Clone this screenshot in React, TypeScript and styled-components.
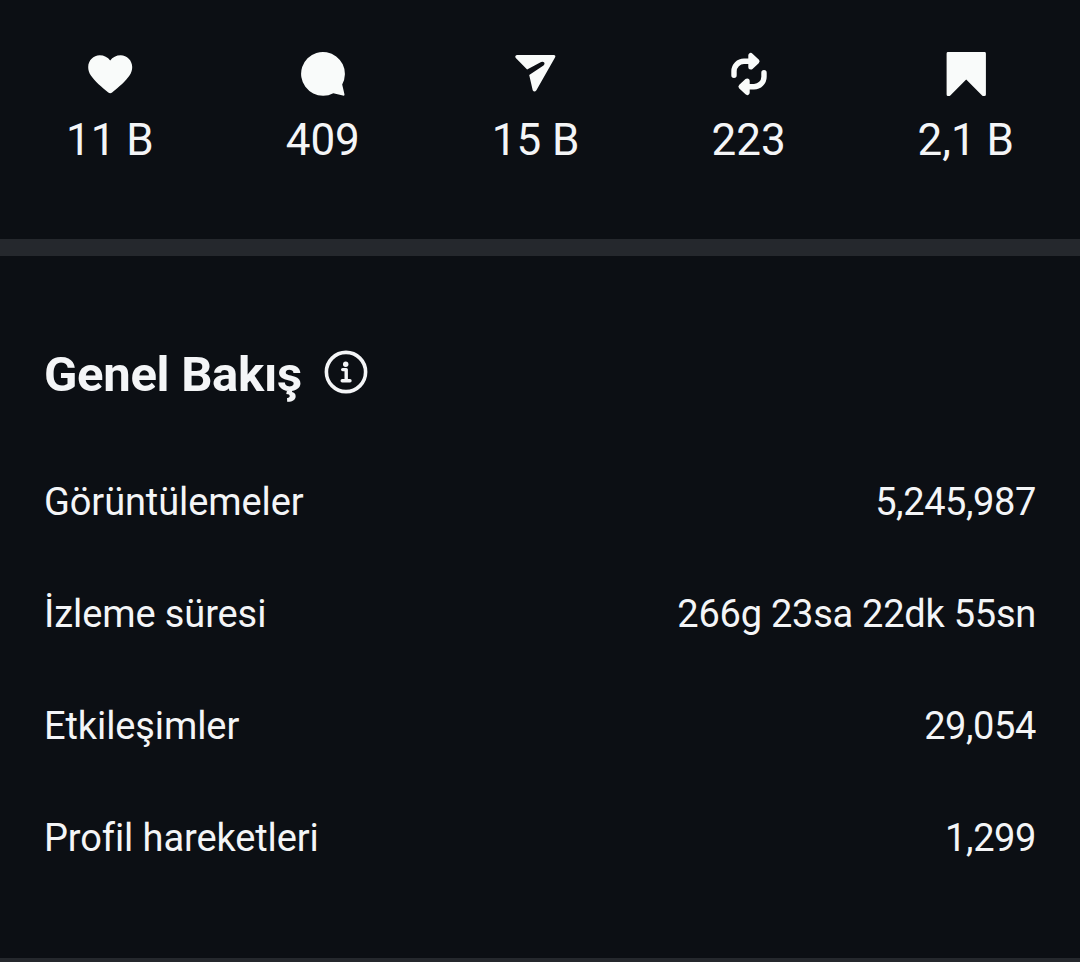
import React from 'react'
import styled, { createGlobalStyle } from 'styled-components'

const GlobalStyle = createGlobalStyle`
  * {
    box-sizing: border-box;
  }

  body {
    margin: 0;
    background: #0c0f14;
    color: #f4f5f7;
    font-family: Roboto, "Liberation Sans", sans-serif;
  }

  h2, ul, dl, dd {
    margin: 0;
    padding: 0;
  }
`;

const Screen = styled.main`
  display: flex;
  flex-direction: column;
  width: 1080px;
  height: 962px;
  overflow: hidden;
`;

const StatsBar = styled.ul`
  display: flex;
  justify-content: space-around;
  height: 239px;
  padding-top: 50px;
  list-style: none;
`;

const Stat = styled.li`
  display: flex;
  flex-direction: column;
  align-items: center;
  gap: 16px;
  font-size: 44px;
  line-height: 52px;
  white-space: nowrap;
`;

const StatIcon = styled.svg`
  width: 48px;
  height: 48px;
  fill: #f9fbfa;
`;

const Divider = styled.div<{ $size: number }>`
  flex: none;
  height: ${({ $size }) => $size}px;
  background: #25282d;
`;

const Overview = styled.section`
  height: 702px;
  padding: 91px 44px 0;
`;

const Title = styled.div`
  display: flex;
  align-items: center;
  gap: 22px;
  margin-bottom: 43px;

  h2 {
    font-size: 49px;
    font-weight: 700;
    line-height: 56px;
    letter-spacing: -0.3px;
  }
`;

const InfoIcon = styled.svg`
  width: 44px;
  height: 44px;
  margin-bottom: 6px;
  fill: none;
  stroke: #f4f5f7;
  stroke-width: 3.6;
  stroke-linecap: round;
  stroke-linejoin: round;
`;

const Row = styled.div`
  display: flex;
  align-items: center;
  justify-content: space-between;
  height: 112px;
  font-size: 38px;
  line-height: 46px;
`;

const Label = styled.dt`
  letter-spacing: -0.1px;
`;

const Value = styled.dd<{ $spacing: number }>`
  letter-spacing: ${({ $spacing }) => $spacing}px;
`;

type TStat = {
  name: string;
  value: string;
  icon: React.ReactNode;
}

const repostArrow = (
  <>
    <path d='M9 25.2V21.3A10 10 0 0 1 19 11.3H29' fill='none' stroke='#f9fbfa' strokeWidth='5.4' strokeLinecap='round' />
    <path d='M25.800 5.500V17.100L32 11.300Z' stroke='#f9fbfa' strokeWidth='5' strokeLinejoin='round' />
  </>
)

const stats: TStat[] = [
  {
    name: 'like',
    value: '11 B',
    icon: <path d='M22.3 42.5C16 37.5 8.500 31 4.900 25.500C3 22.700 2.200 20 2.200 17C2.200 10.300 7.500 5.200 13.700 5.200C18 5.200 21.900 7.200 24.200 10.400C26.500 7.200 30.400 5.200 34.700 5.200C40.900 5.200 46.200 10.300 46.200 17C46.200 20 45.400 22.700 43.500 25.500C39.900 31 32.400 37.500 26.100 42.500Q24.200 43.900 22.300 42.500Z' />,
  },
  {
    name: 'comment',
    value: '409',
    icon: <path d='M43.200 34.400A21.900 21.900 0 1 0 34.300 43.200L43.900 45.600Q45.800 46 45.400 44.100Z' />,
  },
  {
    name: 'share',
    value: '15 B',
    icon: <path d='M4.900 5.100H41.700Q44.200 5.300 43 7.600L24.400 40.300Q22.400 42.900 20.700 40.200L17.200 24.900L31.500 15.600Q33.300 14.100 32.200 12.500Q31 11.200 29.100 12.100L15.100 19.600L3.800 8Q2.300 5.900 4.900 5.100Z' />,
  },
  {
    name: 'repost',
    value: '223',
    icon: (
      <>
        {repostArrow}
        <g transform='rotate(180 24 24)'>{repostArrow}</g>
      </>
    ),
  },
  {
    name: 'save',
    value: '2,1 B',
    icon: <path d='M6 2H42.500Q43.900 2 43.900 3.400V44.500Q43.900 46 42.400 46H41.500Q40.700 46 40.100 45.400L24.200 29.400L8.300 45.400Q7.700 46 6.900 46H6Q4.600 46 4.600 44.500V3.400Q4.600 2 6 2Z' />,
  },
]

const rows = [
  { label: 'Görüntülemeler', value: '5,245,987', spacing: -0.4 },
  { label: 'İzleme süresi', value: '266g 23sa 22dk 55sn', spacing: -0.25 },
  { label: 'Etkileşimler', value: '29,054', spacing: -0.4 },
  { label: 'Profil hareketleri', value: '1,299', spacing: -0.4 },
]

export default function App() {
  return (
    <Screen lang='tr'>
      <GlobalStyle />

      <StatsBar>
        {stats.map((stat) => (
          <Stat key={stat.name}>
            <StatIcon viewBox='0 0 48 48' aria-hidden='true'>{stat.icon}</StatIcon>
            <span>{stat.value}</span>
          </Stat>
        ))}
      </StatsBar>

      <Divider $size={17} />

      <Overview>
        <Title>
          <h2>Genel Bakış</h2>
          <InfoIcon viewBox='0 0 44 44' aria-hidden='true'>
            <circle cx='22' cy='22' r='19.600' />
            <circle cx='21.700' cy='14.200' r='2.700' fill='#f4f5f7' stroke='none' />
            <path d='M18.700 19.600H22.200V30.800M18.200 30.800H26' strokeWidth='3.4' />
          </InfoIcon>
        </Title>
        <dl>
          {rows.map((row) => (
            <Row key={row.label}>
              <Label>{row.label}</Label>
              <Value $spacing={row.spacing}>{row.value}</Value>
            </Row>
          ))}
        </dl>
      </Overview>

      <Divider $size={4} />
    </Screen>
  )
}
